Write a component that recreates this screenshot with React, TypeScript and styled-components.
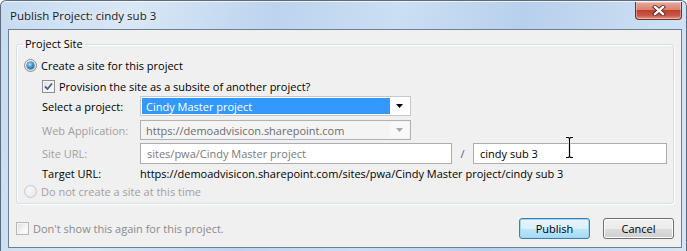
import React, { useState } from 'react'
import styled, { createGlobalStyle } from 'styled-components'

const GlobalStyle = createGlobalStyle`
  html, body {
    margin: 0;
    padding: 0;
    background: #ffffff;
  }
  body {
    font-family: 'Open Sans', 'Segoe UI', sans-serif;
    font-size: 11px;
    color: #000;
  }
`

const SFrame = styled.div`
  width: 687px;
  height: 251px;
  box-sizing: border-box;
  border: 1px solid #5d6b7d;
  border-bottom: none;
  border-radius: 6px 6px 0 0;
  padding: 0 4px 3px 7px;
  display: flex;
  flex-direction: column;
  background: linear-gradient(100deg, #c6dbf1 0%, #d9e7f6 18%, #bcd4ee 38%, #cbdff3 55%, #b7d0ec 72%, #d5e5f6 100%);
  box-shadow: inset 0 1px 0 rgba(255, 255, 255, 0.7);
`

const STitleBar = styled.div`
  height: 28px;
  display: flex;
  align-items: flex-start;
  justify-content: space-between;
`

const STitle = styled.div`
  font-size: 11.5px;
  line-height: 16px;
  padding: 7px 0 0 2px;
  color: #1a1a1a;
  text-shadow: 0 0 8px rgba(255, 255, 255, 0.9);
`

const SCloseButton = styled.div`
  width: 47px;
  height: 18px;
  margin-top: 1px;
  box-sizing: border-box;
  border: 1px solid #6e3027;
  border-top: none;
  border-radius: 0 0 4px 4px;
  background: linear-gradient(180deg, #e8a99a 0%, #d9826f 45%, #c0402b 50%, #c9584a 80%, #e09a85 100%);
  display: flex;
  align-items: center;
  justify-content: center;
  box-shadow: inset 0 0 0 1px rgba(255, 255, 255, 0.35);
`

const SClient = styled.div`
  flex: 1;
  box-sizing: border-box;
  border: 1px solid #6f7f93;
  background: #f0f0f0;
  padding: 0 7px;
  display: flex;
  flex-direction: column;
`

const SGroup = styled.fieldset`
  margin: 6px 0 0;
  padding: 4px 0 3px;
  border: 1px solid #d5dfe5;
  border-radius: 3px;
  box-shadow: inset 1px 1px 0 #ffffff, 1px 1px 0 #ffffff;
  display: flex;
  flex-direction: column;
  min-width: 0;
`

const SLegend = styled.legend`
  margin-left: 6px;
  padding: 0 2px;
  line-height: 16px;
`

const SOptionRow = styled.div<{ $indent: number; $top?: number; $disabled?: boolean }>`
  height: 18px;
  margin-top: ${(p) => p.$top || 0}px;
  padding-left: ${(p) => p.$indent}px;
  display: flex;
  align-items: center;
  gap: 4px;
  color: ${(p) => (p.$disabled ? '#a0a0a0' : '#000')};
`

const SRadio = styled.span<{ $checked?: boolean; $disabled?: boolean }>`
  width: 13px;
  height: 13px;
  box-sizing: border-box;
  border-radius: 50%;
  border: 1px solid ${(p) => (p.$disabled ? '#c9c9c9' : '#8e8f8f')};
  background: ${(p) =>
    p.$disabled
      ? 'radial-gradient(circle at 40% 35%, #f7f7f7, #e6e6e6)'
      : 'radial-gradient(circle at 40% 35%, #ffffff, #d4d4d4)'};
  display: flex;
  align-items: center;
  justify-content: center;
  flex-shrink: 0;

  &::after {
    content: '';
    display: ${(p) => (p.$checked ? 'block' : 'none')};
    width: 7px;
    height: 7px;
    border-radius: 50%;
    background: radial-gradient(circle at 40% 35%, #b5e6ff 0%, #3a95dc 45%, #14539e 90%);
    box-shadow: 0 0 0 0.5px #1c4f8a;
  }
`

const SCheck = styled.span<{ $disabled?: boolean }>`
  width: 13px;
  height: 13px;
  box-sizing: border-box;
  border: 1px solid ${(p) => (p.$disabled ? '#b8b8b8' : '#8e8f8f')};
  background: linear-gradient(135deg, #dcdcdc 0%, #f6f6f6 60%, #ffffff 100%);
  box-shadow: inset 0 0 0 1px #f4f4f4;
  display: flex;
  align-items: center;
  justify-content: center;
  flex-shrink: 0;
`

const SFieldRow = styled.div<{ $height: number; $top: number }>`
  height: ${(p) => p.$height}px;
  margin-top: ${(p) => p.$top}px;
  padding-left: 25px;
  display: flex;
  align-items: center;
`

const SLabel = styled.span<{ $disabled?: boolean }>`
  width: 98px;
  flex-shrink: 0;
  color: ${(p) => (p.$disabled ? '#a0a0a0' : '#000')};
`

const SCombo = styled.div<{ $disabled?: boolean }>`
  width: 271px;
  height: 100%;
  box-sizing: border-box;
  border: 1px solid ${(p) => (p.$disabled ? '#adb2b5' : '#c5c8cc')};
  padding: 1px;
  display: flex;
  background: ${(p) => (p.$disabled ? '#f4f4f4' : '#ffffff')};
`

const SComboValue = styled.div<{ $selected?: boolean; $disabled?: boolean }>`
  flex: 1;
  display: flex;
  align-items: center;
  padding-left: ${(p) => (p.$selected ? 4 : 4)}px;
  background: ${(p) => (p.$selected ? '#3399ff' : 'transparent')};
  color: ${(p) => (p.$selected ? '#ffffff' : p.$disabled ? '#6d6d6d' : '#000')};
`

const SComboArrow = styled.div<{ $disabled?: boolean }>`
  width: 19px;
  display: flex;
  align-items: center;
  justify-content: center;
  background: ${(p) => (p.$disabled ? '#f8f8f8' : 'transparent')};
`

const STextBox = styled.div<{ $width: number; $disabled?: boolean }>`
  position: relative;
  width: ${(p) => p.$width}px;
  height: 100%;
  box-sizing: border-box;
  border: 1px solid #abadb3;
  background: #ffffff;
  padding-left: 6px;
  display: flex;
  align-items: center;
  color: ${(p) => (p.$disabled ? '#7a7a7a' : '#000')};
`

const SSlash = styled.span`
  width: 21px;
  text-align: center;
  color: #4a5f7a;
`

const SCursor = styled.svg`
  position: absolute;
  left: 91px;
  top: -8px;
`

const SFooter = styled.div`
  margin-top: 14px;
  height: 21px;
  display: flex;
  align-items: center;
`

const SFooterCheck = styled.div`
  flex: 1;
  display: flex;
  align-items: center;
  gap: 4px;
  color: #8a8a8a;
`

const SButton = styled.div<{ $default?: boolean }>`
  width: 71px;
  height: 21px;
  box-sizing: border-box;
  margin-left: ${(p) => (p.$default ? 0 : 13)}px;
  border: 1px solid ${(p) => (p.$default ? '#3c7fb1' : '#707070')};
  border-radius: 3px;
  display: flex;
  align-items: center;
  justify-content: center;
  background: ${(p) =>
    p.$default
      ? 'linear-gradient(180deg, #eaf6fd 0%, #d9f0fc 50%, #bee6fd 51%, #a7d9f5 100%)'
      : 'linear-gradient(180deg, #f2f2f2 0%, #ebebeb 50%, #dddddd 51%, #cfcfcf 100%)'};
  box-shadow: inset 0 0 0 1px ${(p) => (p.$default ? '#9ed7f5' : '#fcfcfc')};
  cursor: default;
`

const ArrowIcon = ({ color }: { color: string }) => (
  <svg width="7" height="4" viewBox="0 0 7 4">
    <path d="M0 0 H7 L3.5 4 Z" fill={color} />
  </svg>
)

const CheckIcon = () => (
  <svg width="9" height="9" viewBox="0 0 9 9">
    <path d="M1 4.5 L3.5 7 L8 1.5" fill="none" stroke="#4a5f86" strokeWidth="1.8" />
  </svg>
)

const App = () => {
  const [subsite, setSubsite] = useState(true)
  const [siteName, setSiteName] = useState('cindy sub 3')

  return (
    <>
      <GlobalStyle />
      <SFrame>
        <STitleBar>
          <STitle>Publish Project: {siteName}</STitle>
          <SCloseButton>
            <svg width="14" height="11" viewBox="0 0 14 11">
              <path d="M3 2 L11 9 M11 2 L3 9" stroke="#4a1a14" strokeWidth="4" strokeLinecap="square" />
              <path d="M3 2 L11 9 M11 2 L3 9" stroke="#ffffff" strokeWidth="2.4" strokeLinecap="square" />
            </svg>
          </SCloseButton>
        </STitleBar>
        <SClient>
          <SGroup>
            <SLegend>Project Site</SLegend>
            <SOptionRow $indent={7}>
              <SRadio $checked />
              Create a site for this project
            </SOptionRow>
            <SOptionRow $indent={25} $top={3} onClick={() => setSubsite(!subsite)}>
              <SCheck>{subsite && <CheckIcon />}</SCheck>
              Provision the site as a subsite of another project?
            </SOptionRow>
            <SFieldRow $height={20} $top={1}>
              <SLabel>Select a project:</SLabel>
              <SCombo>
                <SComboValue $selected>Cindy Master project</SComboValue>
                <SComboArrow>
                  <ArrowIcon color="#000" />
                </SComboArrow>
              </SCombo>
            </SFieldRow>
            <SFieldRow $height={20} $top={4}>
              <SLabel $disabled>Web Application:</SLabel>
              <SCombo $disabled>
                <SComboValue $disabled>https://demoadvisicon.sharepoint.com</SComboValue>
                <SComboArrow $disabled>
                  <ArrowIcon color="#a8a8a8" />
                </SComboArrow>
              </SCombo>
            </SFieldRow>
            <SFieldRow $height={21} $top={3}>
              <SLabel $disabled>Site URL:</SLabel>
              <STextBox $width={312} $disabled>sites/pwa/Cindy Master project</STextBox>
              <SSlash>/</SSlash>
              <STextBox $width={194}>
                {siteName}
                <SCursor width="9" height="23" viewBox="0 0 9 23">
                  <path d="M1 1.5 H3.5 L4.5 2.5 L5.5 1.5 H8 M4.5 2.5 V20.5 M1 21.5 H3.5 L4.5 20.5 L5.5 21.5 H8" fill="none" stroke="#ffffff" strokeWidth="2.6" />
                  <path d="M1 1.5 H3.5 L4.5 2.5 L5.5 1.5 H8 M4.5 2.5 V20.5 M1 21.5 H3.5 L4.5 20.5 L5.5 21.5 H8" fill="none" stroke="#000000" strokeWidth="1.2" />
                </SCursor>
              </STextBox>
            </SFieldRow>
            <SFieldRow $height={18} $top={0}>
              <SLabel>Target URL:</SLabel>
              <span>https://demoadvisicon.sharepoint.com/sites/pwa/Cindy Master project/{siteName}</span>
            </SFieldRow>
            <SOptionRow $indent={7} $disabled>
              <SRadio $disabled />
              Do not create a site at this time
            </SOptionRow>
          </SGroup>
          <SFooter>
            <SFooterCheck>
              <SCheck $disabled />
              Don't show this again for this project.
            </SFooterCheck>
            <SButton $default onClick={() => setSiteName(siteName)}>Publish</SButton>
            <SButton>Cancel</SButton>
          </SFooter>
        </SClient>
      </SFrame>
    </>
  )
}

export default App
